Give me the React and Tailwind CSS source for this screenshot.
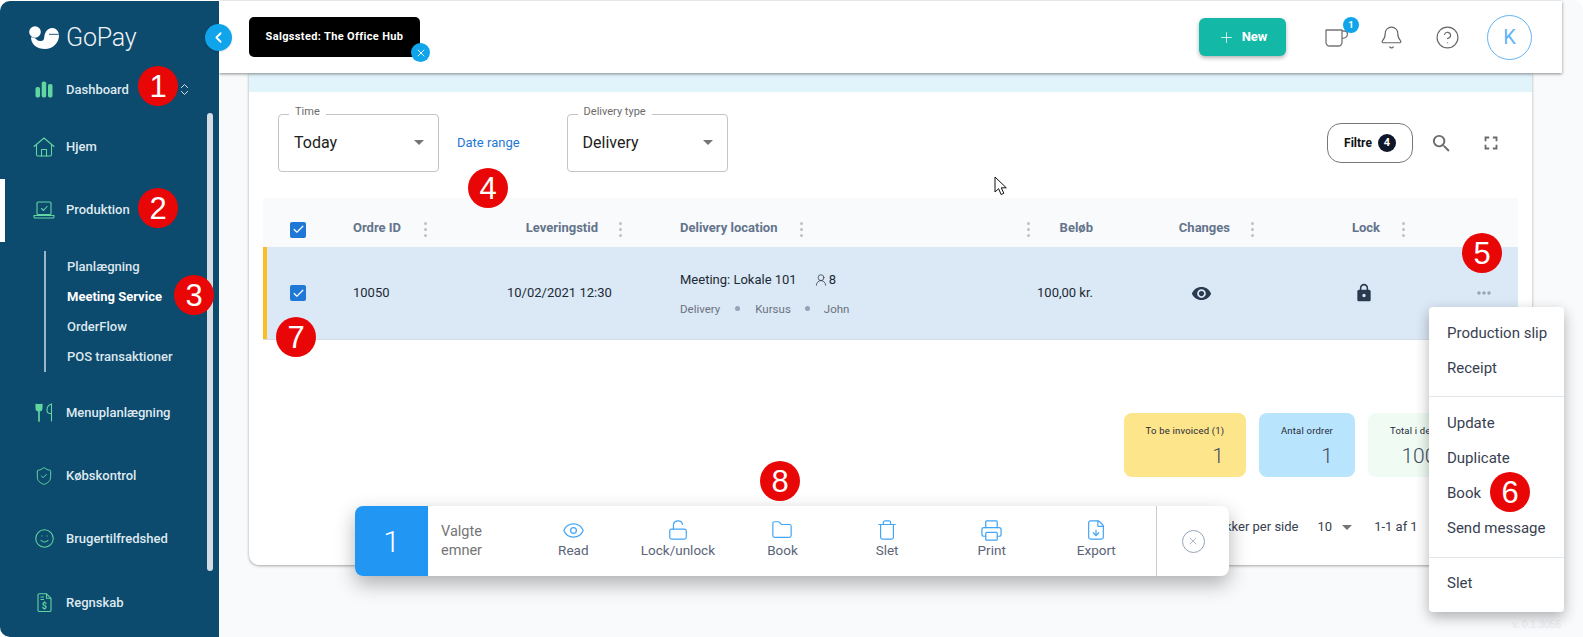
import React from 'react';
import {
  Smile,
  ShieldCheck,
  Eye,
  LockOpen,
  Folder,
  Trash,
  Printer,
  FileDown,
  X,
  Plus,
  Bell,
  CircleHelp,
  ChevronLeft,
  ChevronsUpDown,
  Check,
  UserRound,
} from 'lucide-react';
import { MdVisibility, MdLock, MdSearch, MdOutlineFullscreen, MdMoreHoriz } from 'react-icons/md';

const GREEN = '#62d6a0';

function Marker({ children, className }) {
  return (
    <div
      className={`absolute z-40 flex h-10 w-10 items-center justify-center rounded-full bg-[#e90606] font-['Liberation_Sans',sans-serif] text-[31px] leading-none text-white ${className}`}
    >
      {children}
    </div>
  );
}

function BarsIcon() {
  return (
    <svg width="18" height="17" viewBox="0 0 18 17" fill={GREEN}>
      <rect x="0.500" y="6" width="4.500" height="10.500" rx="1.800" />
      <rect x="6.700" y="0.500" width="4.500" height="16" rx="1.800" />
      <rect x="13" y="3" width="4.500" height="13.500" rx="1.800" />
    </svg>
  );
}

function HomeIcon() {
  return (
    <svg width="22" height="20" viewBox="0 0 22 20" fill="none" stroke={GREEN} strokeWidth="1.100" strokeLinejoin="round" strokeLinecap="round">
      <path d="M1 9.500L11 1l10 8.500" />
      <path d="M3.500 8v9.500a1.500 1.500 0 0 0 1.500 1.500h12a1.500 1.500 0 0 0 1.500-1.500V8" />
      <path d="M8.500 19v-6.500h5V19" />
    </svg>
  );
}

function ProductionIcon() {
  return (
    <svg width="22" height="18" viewBox="0 0 22 18" fill="none" stroke={GREEN} strokeWidth="1.100" strokeLinejoin="round">
      <rect x="4" y="1" width="14" height="12.500" rx="1" />
      <path d="M1 14.500h20v1.200a1.300 1.300 0 0 1-1.300 1.300H2.300a1.300 1.300 0 0 1-1.300-1.300z" />
      <path d="M8.500 7.500l2 2 3.500-4" strokeLinecap="round" />
    </svg>
  );
}

function CutleryIcon() {
  return (
    <svg width="18" height="19" viewBox="0 0 18 19" fill="none" stroke={GREEN} strokeWidth="1.100" strokeLinecap="round">
      <path d="M1 1v4c0 2 1.400 3 3 3s3-1 3-3V1" fill={GREEN} />
      <path d="M4 8v10" strokeWidth="1.700" />
      <path d="M16.500 18V1c-3 .8-4.500 3.200-4.500 6 0 2.400 1.500 3.800 4.500 3.800" />
    </svg>
  );
}

function InvoiceIcon() {
  return (
    <svg width="15" height="19" viewBox="0 0 15 19" fill="none" stroke={GREEN} strokeWidth="1.100" strokeLinejoin="round">
      <path d="M2 .8h7.500L14 5.300v11.900a1.300 1.300 0 0 1-1.300 1.300H2.300A1.300 1.300 0 0 1 1 17.200V1.800a1 1 0 0 1 1-1z" />
      <path d="M9.500 .8v4.500H14M3.500 4h3.500M3.500 6.500h3.500" />
      <text x="4.700" y="16" fontSize="9" fontFamily="Roboto, sans-serif" fill={GREEN} stroke="none" fontWeight="700">$</text>
    </svg>
  );
}

function CupIcon() {
  return (
    <svg width="24" height="19" viewBox="0 0 24 19" fill="none" stroke="#757575" strokeWidth="1.300" strokeLinejoin="round">
      <path d="M1 2h16v12.500a3.500 3.500 0 0 1-3.500 3.500h-9A3.500 3.500 0 0 1 1 14.500z" />
      <path d="M17 3h2.500a3 3 0 0 1 3 3c0 2.600-2.500 4.200-5.500 4.600" />
    </svg>
  );
}

function Logo() {
  return (
    <svg width="30" height="25" viewBox="0 0 30 25">
      <circle cx="6" cy="7" r="5.800" fill="white" />
      <path
        d="M2 12.300c2.800 0 4.800 1.200 6.300 3 1.500 1 5.200 1 6.300-.5.400-.5.500-1.200.6-2.500C15.800 6.500 19 3 23 3c3.300 0 5.800 2 6.700 5.200.2.800.3 1.500.3 2.300 0 7.400-6.300 13.500-14 13.500S2 19.700 2 12.300z"
        fill="white"
      />
      <path d="M20 9.300h9.800" stroke="#0c4a6e" strokeWidth="0.900" />
    </svg>
  );
}

function Kebab({ className = '' }) {
  return (
    <span className={`flex translate-y-[2px] flex-col gap-[3px] ${className}`}>
      <i className="h-[3px] w-[3px] rounded-full bg-[#bcc1c8]" />
      <i className="h-[3px] w-[3px] rounded-full bg-[#bcc1c8]" />
      <i className="h-[3px] w-[3px] rounded-full bg-[#bcc1c8]" />
    </span>
  );
}

function Caret() {
  return <span className="block h-0 w-0 border-x-[5px] border-t-[5px] border-x-transparent border-t-[#757575]" />;
}

function Box({ className = '' }) {
  return (
    <span className={`flex h-4 w-4 items-center justify-center rounded-[2px] bg-[#1f78d6] ${className}`}>
      <Check size={13} strokeWidth={2.200} color="white" />
    </span>
  );
}

function SelectBox({ label, value }) {
  return (
    <div className="relative flex h-[58px] w-[161px] items-center justify-between rounded-[4px] border border-[#c4c4c4] pl-[15px] pr-[14px] pb-[1px]">
      <span className="absolute -top-[10px] left-[10px] bg-white px-[6px] text-[11px] leading-[13px] text-[#6b6b6b]">{label}</span>
      <span className="text-[16px] text-[#212121]">{value}</span>
      <Caret />
    </div>
  );
}

function NavItem({ icon, label, className = '' }) {
  return (
    <div className={`flex items-center ${className}`}>
      <span className="flex w-[66px] justify-center pl-[33px] pr-[11px]">{icon}</span>
      <span className="text-[13px] font-medium text-[#dfe9ef]">{label}</span>
    </div>
  );
}

function Stat({ label, value, className, labelClass = 'text-center', valueClass = 'pr-[22px]' }) {
  return (
    <div className={`flex h-16 flex-col rounded-[8px] pt-[12px] ${className}`}>
      <span className={`whitespace-nowrap text-[9.500px] leading-[12px] tracking-[0.2px] text-[#1f2937] ${labelClass}`}>{label}</span>
      <span className={`mt-[5px] whitespace-nowrap text-right text-[21px] font-light leading-7 text-[#3f4d63] ${valueClass}`}>{value}</span>
    </div>
  );
}

function BarAction({ icon, label }) {
  return (
    <div className="-mt-[5px] flex w-[104.600px] flex-col items-center">
      <span className="flex h-[24px] items-center text-[#42a5f5]">{icon}</span>
      <span className="-mt-[1px] text-[13.500px] leading-[18px] text-[#5b6478]">{label}</span>
    </div>
  );
}

const menuGroups = [
  { items: ['Production slip', 'Receipt'], className: '' },
  { items: ['Update', 'Duplicate', 'Book', 'Send message'], className: 'mt-[10px] border-t border-[#e2e5e9] pt-[9px]' },
  { items: ['Slet'], className: 'mt-[11px] border-t border-[#e2e5e9] pt-[8px]' },
];

export default function App() {
  return (
    <div className="relative flex h-[637px] w-[1583px] overflow-hidden bg-white font-['Roboto',sans-serif]">
      {/* sidebar */}
      <aside className="relative z-20 mt-[1px] flex h-[636px] w-[219px] shrink-0 flex-col rounded-l-[10px] bg-[#0c4a6e]">
        <div className="flex items-center gap-[7px] pl-[29px] pt-[24px]">
          <Logo />
          <span className="text-[25px] font-light leading-[25px] tracking-[-0.2px] text-[#eef3f6]">GoPay</span>
        </div>
        <NavItem className="mt-[30px]" icon={<BarsIcon />} label="Dashboard" />
        <NavItem className="mt-[37px]" icon={<HomeIcon />} label="Hjem" />
        <div className="mt-[22px] flex h-[63px] items-center border-l-[5px] border-white">
          <NavItem className="-ml-[5px]" icon={<ProductionIcon />} label="Produktion" />
        </div>
        <div className="ml-[44px] mt-[9px] flex h-[121px] flex-col justify-center gap-[12px] border-l-2 border-[#9db6c6] pl-[21px] pt-[2px] text-[13px] font-medium leading-[18px] text-[#dbe6ec]">
          <span>Planlægning</span>
          <span className="font-bold text-white">Meeting Service</span>
          <span>OrderFlow</span>
          <span>POS transaktioner</span>
        </div>
        <NavItem className="mt-[31px]" icon={<CutleryIcon />} label="Menuplanlægning" />
        <NavItem className="mt-[44px]" icon={<ShieldCheck size={20} strokeWidth={1.200} color={GREEN} />} label="Købskontrol" />
        <NavItem className="mt-[42px]" icon={<Smile size={21} strokeWidth={1.200} color={GREEN} />} label="Brugertilfredshed" />
        <NavItem className="mt-[44px]" icon={<InvoiceIcon />} label="Regnskab" />
        <ChevronsUpDown size={15} color="#e3edf3" strokeWidth={1.500} className="absolute left-[177px] top-[81px]" />
        <div className="absolute left-[207px] top-[112px] h-[458px] w-[6px] rounded-full bg-[#d5dde3]" />
      </aside>

      {/* sidebar toggle */}
      <div className="absolute left-[205px] top-[24px] z-30 flex h-[27px] w-[27px] items-center justify-center rounded-full bg-[#10a5ea] shadow">
        <ChevronLeft size={17} color="white" strokeWidth={2.500} />
      </div>

      <main className="flex min-w-0 flex-1 flex-col rounded-tr-[10px] bg-[#f8fafc]">
        {/* top bar */}
        <header className="relative z-10 mr-[21px] mt-[1px] flex h-[72px] shrink-0 items-center bg-white pl-[30px] shadow-[0_1px_3px_rgba(0,0,0,0.45)]">
          <div className="relative flex h-10 w-[171px] items-center justify-center rounded-[5px] bg-black text-[11px] font-bold tracking-[0.35px] text-white">
            Salgssted: The Office Hub
            <span className="absolute -bottom-[5px] -right-[10px] flex h-[19px] w-[19px] items-center justify-center rounded-full bg-[#10a5ea]">
              <X size={12} color="white" strokeWidth={1.800} />
            </span>
          </div>
          <div className="ml-auto flex items-center pr-[30px]">
            <div className="flex h-[38px] w-[87px] items-center justify-center gap-[7px] rounded-[6px] bg-[#14b8a6] text-[13px] font-bold text-white shadow-[0_2px_4px_rgba(0,0,0,0.3)]">
              <Plus size={17} strokeWidth={1.100} />
              New
            </div>
            <div className="relative ml-[39px] flex h-10 w-6 items-center">
              <CupIcon />
              <span className="absolute left-[18px] top-0 flex h-4 w-4 items-center justify-center rounded-full bg-[#10a5ea] text-[9.500px] font-bold text-white">1</span>
            </div>
            <Bell size={25} strokeWidth={1.100} color="#666" className="ml-[30px]" />
            <CircleHelp size={25} strokeWidth={1.100} color="#666" className="ml-[31px]" />
            <div className="ml-[27px] flex h-[45px] w-[45px] items-center justify-center rounded-full border border-[#64b5f6] text-[20px] text-[#64b5f6]">K</div>
          </div>
        </header>

        {/* card */}
        <section className="ml-[30px] mr-[51px] h-[492px] shrink-0 rounded-b-[10px] bg-white shadow-[0_1px_3px_rgba(0,0,0,0.35)]">
          <div className="h-[19px] bg-[#e1f3fb]" />
          <div className="flex items-center pl-[29px] pr-[30px] pt-[22px]">
            <SelectBox label="Time" value="Today" />
            <span className="ml-[18px] text-[13px] text-[#1f78d6]">Date range</span>
            <div className="ml-[47px]">
              <SelectBox label="Delivery type" value="Delivery" />
            </div>
            <div className="ml-auto flex h-10 w-[86px] items-center justify-center gap-[6px] rounded-[14px] border border-[#777] text-[12px] font-bold text-[#111]">
              Filtre
              <span className="flex h-[18px] w-[18px] items-center justify-center rounded-full bg-[#0f172a] text-[11px] text-white">4</span>
            </div>
            <MdSearch size={23} color="#6b6b6b" className="ml-[17px]" />
            <MdOutlineFullscreen size={22} color="#6b6b6b" className="ml-[27px]" />
          </div>

          <div className="mx-[14px] mt-[26px]">
            <div className="grid h-[49px] grid-cols-[90px_84px_195px_408px_60px_165px_150px_103px] items-center bg-[#f8fafc] pt-[10px] text-[13px] font-bold text-[#64748b]">
              <span className="flex pl-[27px]"><Box className="translate-y-[2px]" /></span>
              <span className="flex items-center justify-between pr-[10px]">Ordre ID <Kebab /></span>
              <span className="flex items-center justify-end pr-[10px]"><span className="mr-[21px]">Leveringstid</span><Kebab /></span>
              <span className="flex items-center pl-[48px] pr-[10px]"><span className="mr-[22px]">Delivery location</span><Kebab /><Kebab className="ml-auto" /></span>
              <span className="pr-[7px] text-right">Beløb</span>
              <span className="flex items-center justify-end pr-[11px]"><span className="mr-[21px]">Changes</span><Kebab /></span>
              <span className="flex items-center justify-end pr-[10px]"><span className="mr-[22px]">Lock</span><Kebab /></span>
              <span />
            </div>
            <div className="grid h-[93px] grid-cols-[90px_84px_195px_408px_60px_165px_150px_103px] items-center border-b border-[#d5dee8] bg-[#dbe8f5] text-[13px] text-[#212b36]">
              <span className="flex h-full items-center border-l-4 border-[#fbbf24] pl-[23px]"><Box /></span>
              <span>10050</span>
              <span className="pl-[70px]">10/02/2021 12:30</span>
              <div className="pl-[48px]">
                <div className="flex items-center">
                  <span>Meeting: Lokale 101</span>
                  <UserRound size={14} strokeWidth={1.200} className="ml-[17px] mr-[1px]" />
                  <span>8</span>
                </div>
                <div className="mt-[12px] flex items-center text-[11.500px] leading-[14px] text-[#6b7280]">
                  Delivery
                  <i className="mx-[15px] h-[5px] w-[5px] rounded-full bg-[#94a3b8]" />
                  Kursus
                  <i className="mx-[14px] h-[5px] w-[5px] rounded-full bg-[#94a3b8]" />
                  John
                </div>
              </div>
              <span className="flex justify-end whitespace-nowrap pr-[7px]">100,00 kr.</span>
              <span className="flex justify-end pr-[53px]"><MdVisibility size={21} color="#2b3a4f" /></span>
              <span className="flex justify-end pr-[41px]"><MdLock size={20} color="#2b3a4f" /></span>
              <span className="flex justify-center pl-[34px]"><MdMoreHoriz size={20} color="#9aa3af" /></span>
            </div>
          </div>

          <div className="mr-[14px] mt-[73px] flex justify-end gap-[13px]">
            <Stat label="To be invoiced (1)" value="1" className="w-[122px] bg-[#fde58b]" />
            <Stat label="Antal ordrer" value="1" className="w-[96px] bg-[#b9e4fd]" />
            <Stat label="Total i denne periode" value="100,00 kr." className="w-[150px] bg-[#effbf3]" labelClass="pl-[22px]" valueClass="pr-[28px]" />
          </div>

          <div className="ml-[957px] mt-[36px] flex h-7 items-center whitespace-nowrap text-[13px] text-[#374151]">
            <span>Rækker per side</span>
            <span className="ml-[19px]">10</span>
            <span className="ml-[10px]"><Caret /></span>
            <span className="ml-[22px]">1-1 af 1</span>
          </div>
        </section>

        <div className="mr-[22px] mt-[54px] text-right font-['Liberation_Sans',sans-serif] text-[10px] leading-3 text-[#e8ecf0]">v. 0.1.3056</div>
      </main>

      {/* floating selection bar */}
      <div className="absolute left-[355px] top-[506px] z-30 flex h-[70px] w-[874px] overflow-hidden rounded-[8px] bg-white shadow-[0_8px_20px_rgba(0,0,0,0.3)]">
        <div className="flex w-[73px] items-center justify-center bg-[#2196f3] text-[30px] font-light text-white">1</div>
        <div className="flex w-[93px] flex-col justify-center pl-[13px] text-[14.500px] leading-[19px] text-[#757575]">
          <span>Valgte</span>
          <span>emner</span>
        </div>
        <div className="flex items-center">
          <BarAction icon={<Eye size={23} strokeWidth={1.300} />} label="Read" />
          <BarAction icon={<LockOpen size={22} strokeWidth={1.300} />} label="Lock/unlock" />
          <BarAction icon={<Folder size={22} strokeWidth={1.300} />} label="Book" />
          <BarAction icon={<Trash size={22} strokeWidth={1.300} />} label="Slet" />
          <BarAction icon={<Printer size={23} strokeWidth={1.300} />} label="Print" />
          <BarAction icon={<FileDown size={22} strokeWidth={1.300} />} label="Export" />
        </div>
        <div className="ml-auto flex w-[73px] items-center justify-center border-l border-[#c9ccd1]">
          <span className="flex h-[23px] w-[23px] items-center justify-center rounded-full border border-[#94a3b8]">
            <X size={12} strokeWidth={1} color="#64748b" />
          </span>
        </div>
      </div>

      {/* row action menu */}
      <div className="absolute left-[1429px] top-[307px] z-30 w-[135px] rounded-[4px] bg-white pb-[11px] pt-[9px] text-[15px] text-[#374151] shadow-[0_5px_14px_rgba(0,0,0,0.3)]">
        {menuGroups.map((group) => (
          <div key={group.items[0]} className={group.className}>
            {group.items.map((item) => (
              <div key={item} className="flex h-[35px] items-center pl-[18px]">{item}</div>
            ))}
          </div>
        ))}
      </div>

      {/* mouse pointer */}
      <svg className="absolute left-[994px] top-[176px] z-20" width="14" height="20" viewBox="0 0 14 20" fill="white" stroke="#111" strokeWidth="1">
        <path d="M1 1v15l3.600-3.300 2.500 5.800 2.700-1.200-2.500-5.500h5z" />
      </svg>

      <Marker className="left-[138px] top-[66px]">1</Marker>
      <Marker className="left-[138px] top-[188px]">2</Marker>
      <Marker className="left-[174px] top-[275px]">3</Marker>
      <Marker className="left-[468px] top-[168px]">4</Marker>
      <Marker className="left-[1462px] top-[233px]">5</Marker>
      <Marker className="left-[1490px] top-[472px]">6</Marker>
      <Marker className="left-[276px] top-[317px]">7</Marker>
      <Marker className="left-[760px] top-[461px]">8</Marker>
    </div>
  );
}
